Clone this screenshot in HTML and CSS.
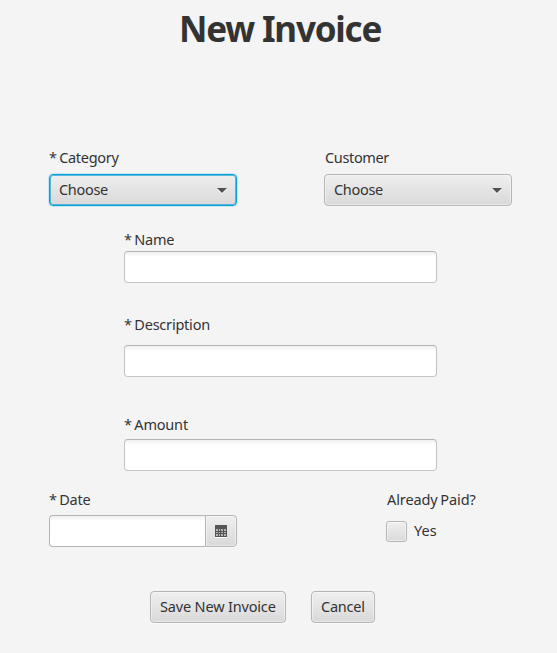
FILE: index.html
```html
<!DOCTYPE html>
<html lang="en">
<head>
<meta charset="utf-8">
<title>New Invoice</title>
<link rel="stylesheet" href="styles.css">
</head>
<body>
<form class="invoice">
  <h1 class="title">New Invoice</h1>
  <div class="row selects">
    <div class="group">
      <div class="label t-category">* Category</div>
      <div class="control select focused" tabindex="0"><span class="text t-choose">Choose</span><svg class="arrow" width="10" height="6" viewBox="0 0 10 6"><path d="M0 1H10L5 6Z" fill="#fff"/><path d="M0 0H10L5 5Z" fill="#525252"/></svg></div>
    </div>
    <div class="group">
      <div class="label t-customer">Customer</div>
      <div class="control select" tabindex="0"><span class="text t-choose">Choose</span><svg class="arrow" width="10" height="6" viewBox="0 0 10 6"><path d="M0 1H10L5 6Z" fill="#fff"/><path d="M0 0H10L5 5Z" fill="#525252"/></svg></div>
    </div>
  </div>
  <div class="field name">
    <label class="label t-name" for="name">* Name</label>
    <input class="control input" id="name" type="text">
  </div>
  <div class="field description">
    <label class="label t-description" for="description">* Description</label>
    <input class="control input" id="description" type="text">
  </div>
  <div class="field amount">
    <label class="label t-amount" for="amount">* Amount</label>
    <input class="control input" id="amount" type="text">
  </div>
  <div class="row details">
    <div class="group">
      <label class="label t-date" for="date">* Date</label>
      <div class="date">
        <input class="control input date-input" id="date" type="text">
        <div class="control date-button">
          <svg width="12" height="13" viewBox="0 0 12 13" shape-rendering="crispEdges"><path d="M0 12H12V13H0Z" fill="#fff"/><path d="M0 0H12V12H0Z" fill="#555"/><path d="M1 4H3V6H1ZM4 4H5V6H4ZM6 4H8V6H6ZM9 4H11V6H9ZM1 7H3V8H1ZM4 7H5V8H4ZM6 7H8V8H6ZM9 7H11V8H9ZM1 9H3V11H1ZM4 9H5V11H4ZM6 9H8V11H6ZM9 9H11V11H9Z" fill="#b4b4b4"/></svg>
        </div>
      </div>
    </div>
    <div class="paid">
      <div class="label t-paid">Already Paid?</div>
      <div class="check"><span class="box"></span><span class="text">Yes</span></div>
    </div>
  </div>
  <div class="actions">
    <button class="control button save" type="button"><span class="text t-save">Save New Invoice</span></button>
    <button class="control button cancel" type="button"><span class="text t-cancel">Cancel</span></button>
  </div>
</form>
</body>
</html>
```
FILE: styles.css
```css
* { box-sizing: border-box; }
body {
  margin: 0;
  background: #f4f4f4;
  color: #333;
  font: 14.5px/20px "Segoe UI", "Noto Sans", sans-serif;
}
.invoice { height: 653px; padding: 5px 45px 0 49px; overflow: hidden; }
.title {
  margin: 0 0 95px;
  padding-left: 130px;
  height: 48px;
  font-size: 35px;
  line-height: 48px;
  font-weight: 700;
  letter-spacing: -1.2px;
  white-space: nowrap;
}
.row { display: flex; justify-content: space-between; }
.group { width: 188px; }
.label { display: block; height: 20px; line-height: 18px; white-space: nowrap; word-spacing: -1px; }
.text { display: block; padding-bottom: 2px; }
.control {
  height: 32px;
  border: 1px solid #b5b5b5;
  border-radius: 4px;
  background: linear-gradient(#efefef, #d9d9d9);
  box-shadow: inset 0 0 0 1px rgba(255, 255, 255, .45), 0 1px 0 #fafafa;
  color: #333;
  font: inherit;
}
.selects .label { margin-bottom: 6px; }
.select {
  display: flex;
  align-items: center;
  justify-content: space-between;
  padding: 0 9px;
  outline: none;
}
.arrow { margin-top: 2px; }
.focused {
  border-color: #0a9fd5;
  box-shadow: inset 0 0 0 1px rgba(10, 159, 213, .65), 0 0 0 1px #c7e9f5;
}
.field { width: 313px; margin-left: 75px; }
.input {
  display: block;
  width: 100%;
  padding: 0 9px;
  background: linear-gradient(#f0f0f0, #fff 5px);
  border-color: #b3b3b3 #c2c2c2 #c6c6c6;
  box-shadow: none;
  outline: none;
}
.name { margin-top: 24px; }
.name .label { margin-bottom: 1px; }
.description { margin-top: 32px; }
.description .label { margin-bottom: 10px; }
.amount { margin-top: 38px; }
.amount .label { margin-bottom: 4px; }
.details { margin-top: 19px; }
.details .label { margin-bottom: 5px; }
.date { display: flex; }
.date-input { width: 156px; border-right: 0; border-radius: 4px 0 0 4px; border-color: #b5b5b5; }
.date-button {
  display: flex;
  align-items: center;
  justify-content: center;
  width: 32px;
  border-radius: 0 4px 4px 0;
}
.paid { width: 126px; padding-left: 1px; }
.check { display: flex; align-items: center; height: 32px; margin-left: -1px; }
.box {
  width: 21px;
  height: 21px;
  margin-right: 7px;
  border: 1px solid #b5b5b5;
  border-radius: 3px;
  background: linear-gradient(#efefef, #dadada);
  box-shadow: inset 0 0 0 1px rgba(255, 255, 255, .5);
}
.actions { display: flex; gap: 25px; margin: 44px 0 0 101px; }
.button { padding: 0 0 0 9px; text-align: left; white-space: nowrap; }
.save { width: 136px; }
.cancel { width: 64px; }
.t-category { letter-spacing: -0.3px; }
.t-customer { padding-left: 1px; letter-spacing: -0.35px; }
.t-choose { letter-spacing: -0.3px; }
.t-name, .t-date { letter-spacing: -0.25px; }
.t-description { letter-spacing: -0.22px; }
.t-amount { letter-spacing: -0.2px; }
.t-paid { letter-spacing: -0.1px; }
.t-save { letter-spacing: -0.17px; }
.t-cancel { letter-spacing: -0.25px; }
```
